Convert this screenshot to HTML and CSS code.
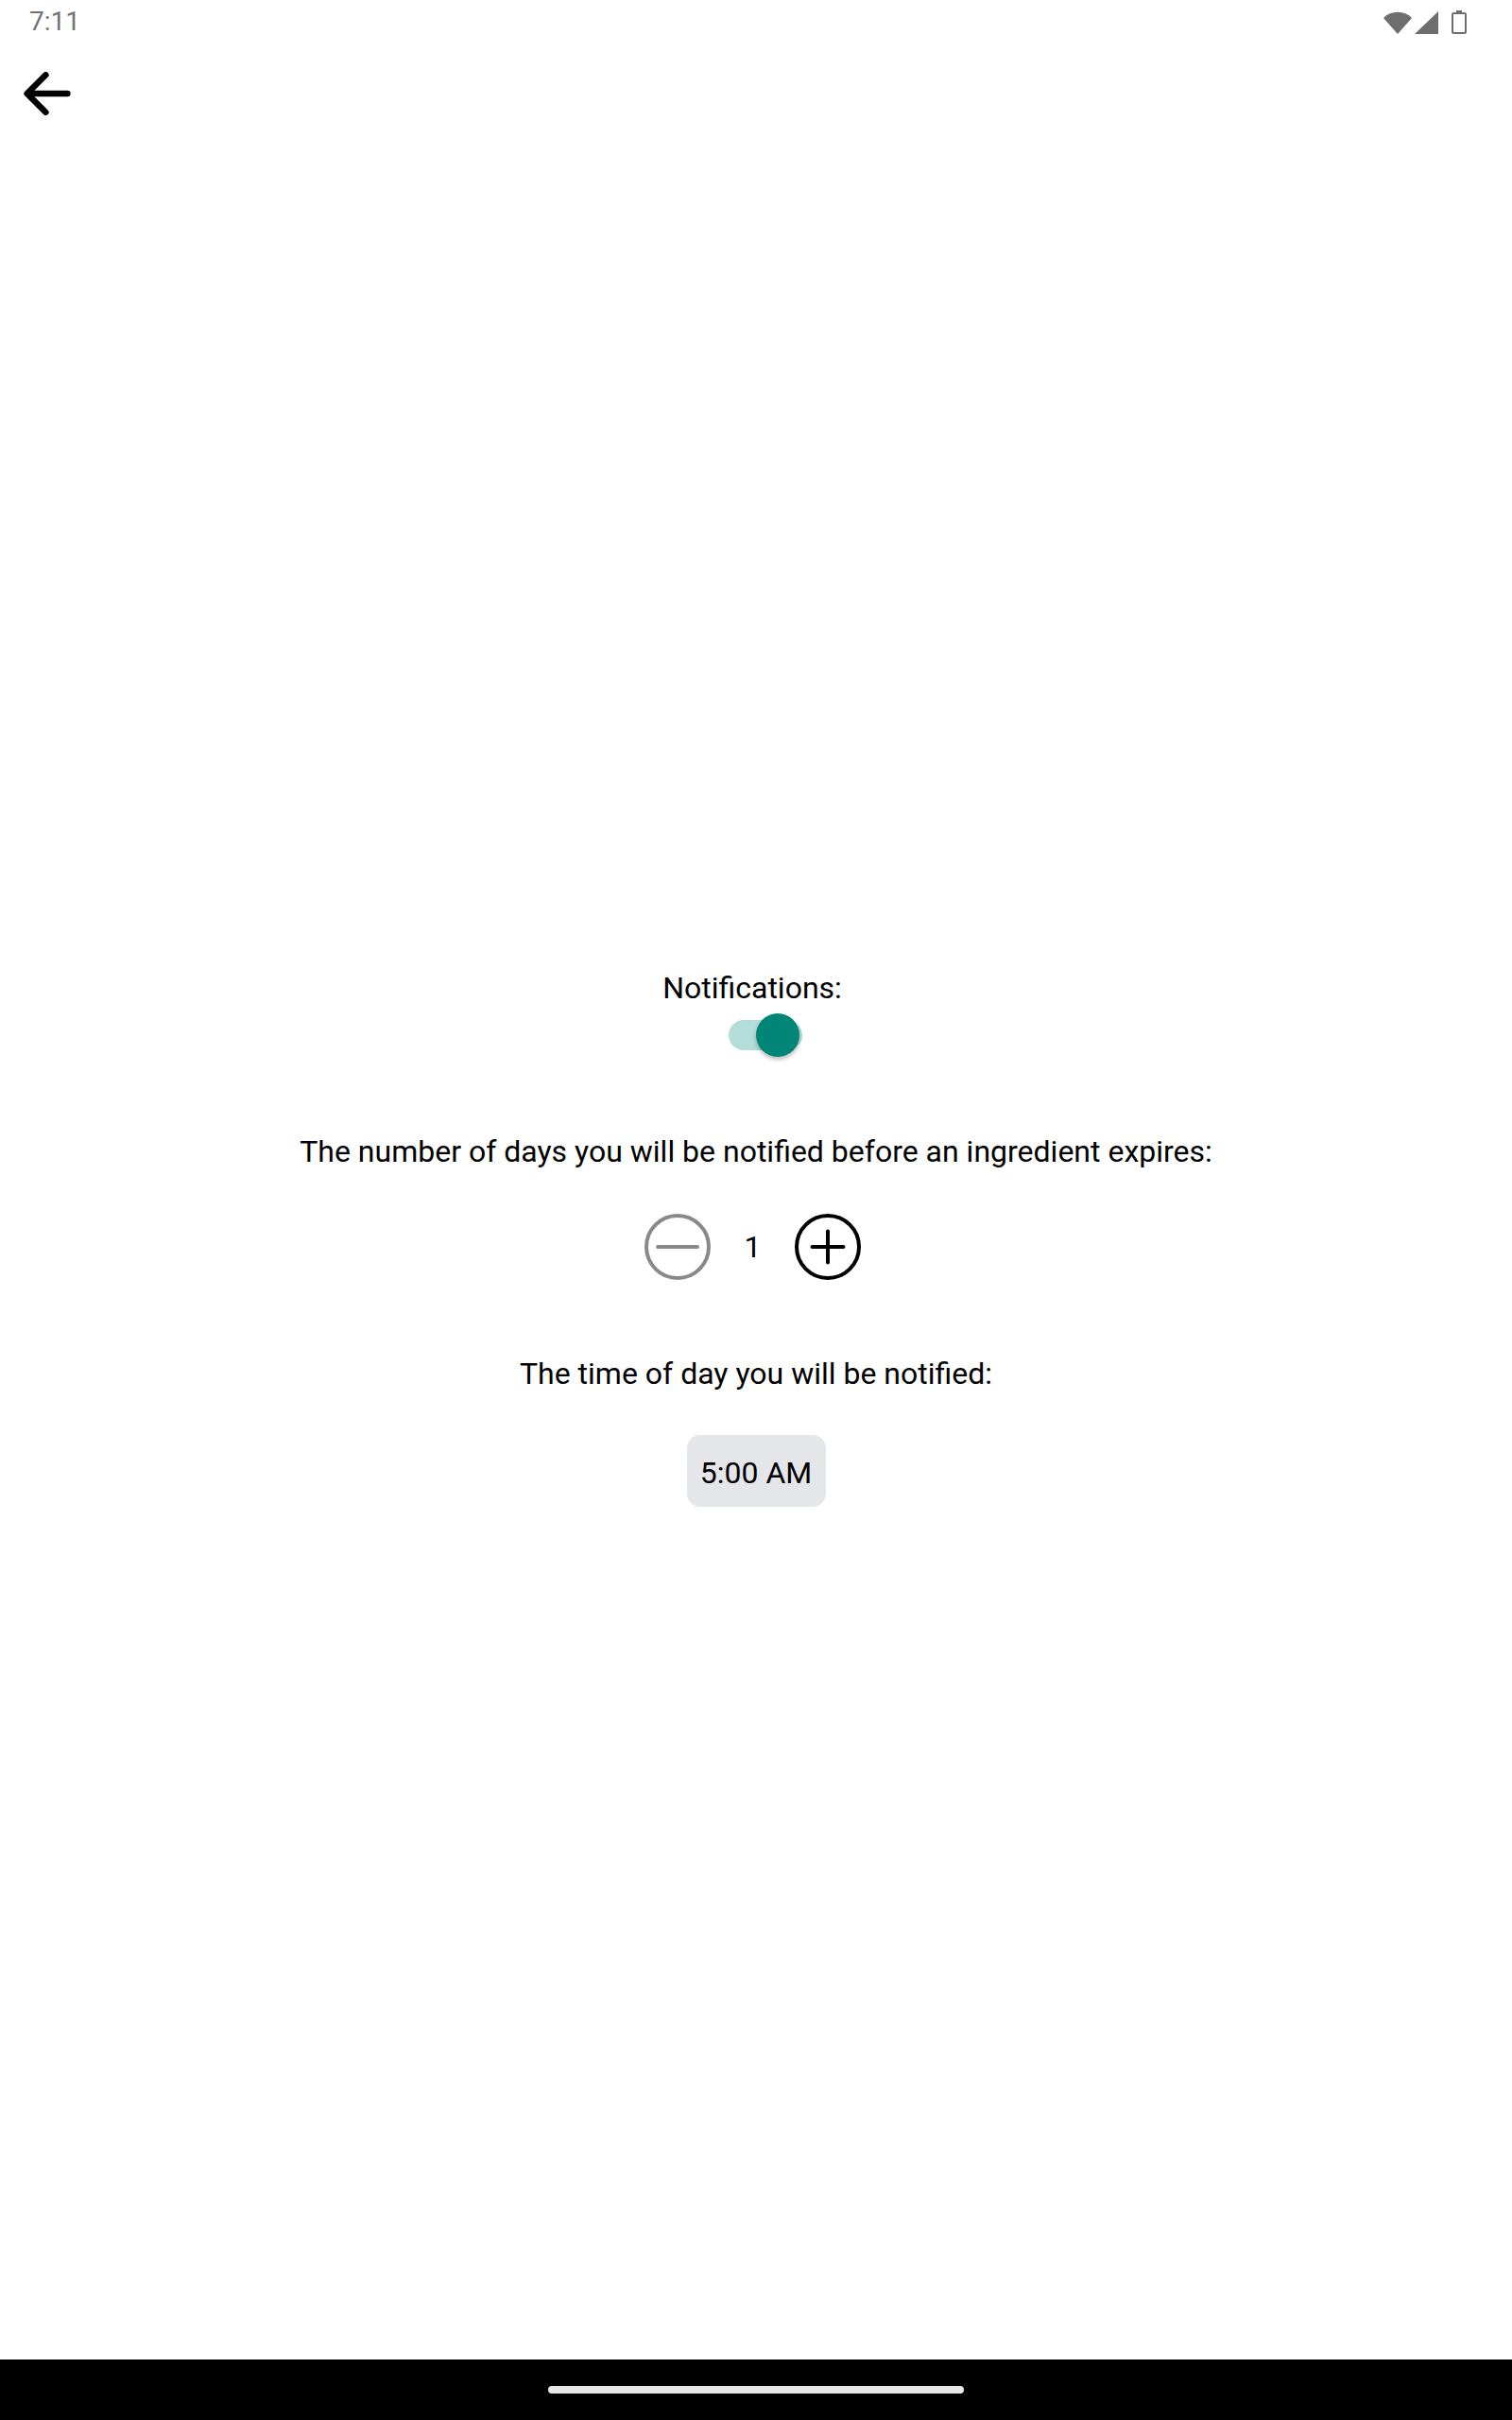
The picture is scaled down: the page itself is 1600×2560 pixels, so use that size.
FILE: index.html
```html
<!DOCTYPE html>
<html>
<head>
<meta charset="utf-8">
<link rel="stylesheet" href="styles.css">
</head>
<body>
<div class="screen">
  <div class="statusbar">
    <span class="clock">7:11</span>
    <div class="sysicons">
      <svg class="wifi" width="30" height="25" viewBox="0 0 30 25"><path d="M0 8 A21 21 0 0 1 30 8 L15 25 Z" fill="#6e6e6e"/></svg>
      <svg class="signal" width="25" height="24" viewBox="0 0 25 24"><path d="M25 0 V24 H0 Z" fill="#6e6e6e"/></svg>
      <svg class="battery" width="16" height="25" viewBox="0 0 16 25"><rect x="5" y="0" width="6" height="3" fill="#6e6e6e"/><rect x="1" y="3" width="14" height="21" rx="1.5" fill="none" stroke="#6e6e6e" stroke-width="2"/></svg>
    </div>
  </div>
  <div class="appbar">
    <svg class="back" width="50" height="46" viewBox="76 88 360 336"><path d="M244 400L100 256l144-144M120 256h292" fill="none" stroke="#000" stroke-width="48" stroke-linecap="round" stroke-linejoin="round"/></svg>
  </div>
  <main class="content">
    <p class="label notif">Notifications:</p>
    <div class="switch">
      <div class="track"></div>
      <div class="thumb"></div>
    </div>
    <p class="label days">The number of days you will be notified before an ingredient expires:</p>
    <div class="stepper">
      <svg width="72" height="72" viewBox="0 0 72 72"><circle cx="36" cy="36" r="33" fill="none" stroke="#898989" stroke-width="4"/><path d="M15 36H57" stroke="#898989" stroke-width="4" stroke-linecap="round"/></svg>
      <span class="count">1</span>
      <svg width="72" height="72" viewBox="0 0 72 72"><circle cx="36" cy="36" r="33" fill="none" stroke="#000" stroke-width="4"/><path d="M19.5 36H52.5M36 19.5V52.5" stroke="#000" stroke-width="4" stroke-linecap="round"/></svg>
    </div>
    <p class="label time">The time of day you will be notified:</p>
    <button class="timebtn">5:00 AM</button>
  </main>
  <div class="navbar"><div class="handle"></div></div>
</div>
</body>
</html>
```
FILE: styles.css
```css
html, body {
  margin: 0;
  padding: 0;
  background: #fff;
}
.screen {
  width: 1600px;
  height: 2560px;
  display: flex;
  flex-direction: column;
  font-family: Roboto, "Noto Sans", sans-serif;
  color: #000;
}
.statusbar {
  height: 48px;
  display: flex;
  justify-content: space-between;
  align-items: flex-start;
  padding: 0 48px 0 31px;
}
.clock {
  font-size: 28px;
  line-height: 28px;
  margin-top: 9px;
  color: #737373;
}
.sysicons {
  display: flex;
  align-items: flex-start;
  margin-top: 11px;
}
.signal { margin-left: 3px; margin-top: 1px; }
.battery { margin-left: 14px; }
.appbar {
  height: 112px;
  box-sizing: border-box;
  padding: 28px 0 0 25px;
}
.back { display: block; }
.content {
  flex: 1;
  display: flex;
  flex-direction: column;
  align-items: center;
  padding-top: 866px;
}
.label {
  margin: 0;
  font-size: 32px;
  line-height: 38px;
  text-align: center;
}
.notif { margin-right: 8px; }
.switch {
  position: relative;
  width: 80px;
  height: 48px;
  margin-top: 7px;
  margin-left: 22px;
}
.track {
  position: absolute;
  left: 0;
  top: 8px;
  width: 78px;
  height: 32px;
  border-radius: 16px;
  background: #b3ddd8;
}
.thumb {
  position: absolute;
  left: 29px;
  top: 1px;
  width: 46px;
  height: 46px;
  border-radius: 50%;
  background: #008577;
  box-shadow: 0 3px 4px rgba(0,0,0,0.25);
}
.days { margin-top: 80px; }
.stepper {
  display: flex;
  align-items: center;
  margin-top: 46px;
  margin-right: 7px;
}
.stepper svg { display: block; }
.count {
  font-size: 32px;
  line-height: 38px;
  margin: 0 35px;
}
.time { margin-top: 79px; }
.timebtn {
  margin-top: 46px;
  width: 147px;
  height: 76px;
  box-sizing: border-box;
  border: none;
  border-radius: 14px;
  background: #e5e6ea;
  font-family: Roboto, sans-serif;
  font-size: 32px;
  color: #000;
  padding: 4px 0 0 0;
}
.navbar {
  height: 64px;
  background: #000;
  display: flex;
  justify-content: center;
}
.handle {
  width: 440px;
  height: 8px;
  border-radius: 4px;
  background: #e8e8e8;
  margin-top: 28px;
}
```
